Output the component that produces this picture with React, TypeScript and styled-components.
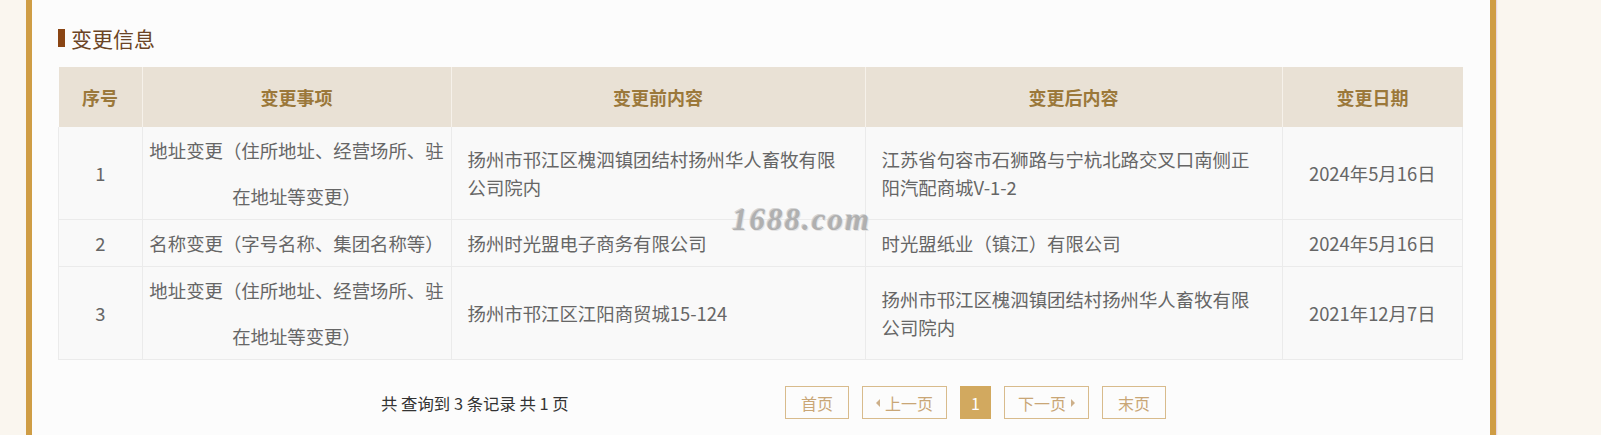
import React from "react";
import styled, { createGlobalStyle } from "styled-components";

const GlobalStyle = createGlobalStyle`
  html, body {
    margin: 0;
    padding: 0;
    background: #faf6ef;
  }
  body {
    font-family: "Noto Sans CJK SC", "Noto Sans", sans-serif;
  }
`;

const Page = styled.div`
  display: flex;
  min-height: 435px;
  padding-left: 26px;
  background: #faf6ef;
  overflow: hidden;
`;

const Panel = styled.section`
  position: relative;
  width: 1404px;
  padding: 0 28px 0 26px;
  border-left: 6px solid #cf9d45;
  border-right: 6px solid #cf9d45;
  background: #fcfcfc;
  box-shadow: 1px 0 1px rgba(200, 160, 200, 0.35);
`;

const SectionTitle = styled.h3`
  display: flex;
  align-items: center;
  gap: 6px;
  margin: 0;
  padding-top: 27px;
  height: 22px;
  font-size: 21px;
  font-weight: normal;
  line-height: 22px;
  color: #6b4424;
`;

const TitleMark = styled.span`
  display: inline-block;
  width: 7px;
  height: 18px;
  background: #8a4514;
`;

const Table = styled.table`
  width: 1400px;
  margin-top: 18px;
  border-collapse: collapse;
  table-layout: fixed;
  font-size: 18.4px;
`;

const HeadCell = styled.th<{ $w: number }>`
  width: ${(p) => p.$w}px;
  height: 60px;
  padding: 0;
  background: #e9e1d5;
  border-left: 1px solid #f6f1ea;
  color: #9b783a;
  font-size: 18px;
  font-weight: bold;
  text-align: center;
  &:first-child {
    border-left: none;
  }
`;

const Row = styled.tr`
  background: #f9f9f9;
  border-bottom: 1px solid #ebebeb;
`;

const Cell = styled.td<{ $align?: "left" | "center" }>`
  padding: ${(p) => (p.$align === "left" ? "0 20px 0 16px" : "0 6px")};
  border: 1px solid #ebebeb;
  border-top: none;
  line-height: 46px;
  color: #666;
  text-align: ${(p) => p.$align ?? "center"};
  vertical-align: middle;
`;

const Wrapped = styled.div`
  line-height: 28px;
`;

const Pager = styled.div`
  display: flex;
  align-items: center;
  margin-top: 26px;
  padding-left: 323px;
`;

const Summary = styled.span`
  width: 404px;
  font-size: 16.4px;
  color: #333;
  white-space: pre;
`;

const PageButtons = styled.div`
  display: flex;
  gap: 13px;
`;

const PageButton = styled.span<{ $active?: boolean; $pad?: number }>`
  display: flex;
  align-items: center;
  justify-content: center;
  gap: 5px;
  height: 31px;
  padding: 0 ${(p) => p.$pad ?? 15}px;
  border: 1px solid ${(p) => (p.$active ? "#d2a95f" : "#d8bb8c")};
  background: ${(p) => (p.$active ? "#d2a95f" : "transparent")};
  color: ${(p) => (p.$active ? "#fff" : "#c9a676")};
  font-size: 16px;
`;

const Arrow = styled.span<{ $dir: "left" | "right" }>`
  width: 0;
  height: 0;
  border-top: 4px solid transparent;
  border-bottom: 4px solid transparent;
  ${(p) =>
    p.$dir === "left"
      ? "border-right: 4px solid #cdb08a;"
      : "border-left: 4px solid #cdb08a;"}
`;

const Watermark = styled.span`
  position: absolute;
  left: 700px;
  top: 202px;
  font-family: "Liberation Serif", "DejaVu Serif", serif;
  font-style: italic;
  font-weight: bold;
  font-size: 31px;
  letter-spacing: 2px;
  color: #a9a9a9;
  text-shadow: 1px 1px 0 #e2e2e2, -1px -1px 0 #d0d0d0;
  opacity: 0.9;
  pointer-events: none;
`;

type Change = {
  no: number;
  item: string;
  before: string;
  after: string;
  date: string;
};

const changes: Change[] = [
  {
    no: 1,
    item: "地址变更（住所地址、经营场所、驻在地址等变更）",
    before: "扬州市邗江区槐泗镇团结村扬州华人畜牧有限公司院内",
    after: "江苏省句容市石狮路与宁杭北路交叉口南侧正阳汽配商城V-1-2",
    date: "2024年5月16日",
  },
  {
    no: 2,
    item: "名称变更（字号名称、集团名称等）",
    before: "扬州时光盟电子商务有限公司",
    after: "时光盟纸业（镇江）有限公司",
    date: "2024年5月16日",
  },
  {
    no: 3,
    item: "地址变更（住所地址、经营场所、驻在地址等变更）",
    before: "扬州市邗江区江阳商贸城15-124",
    after: "扬州市邗江区槐泗镇团结村扬州华人畜牧有限公司院内",
    date: "2021年12月7日",
  },
];

const columns = [
  { title: "序号", width: 83 },
  { title: "变更事项", width: 308 },
  { title: "变更前内容", width: 413 },
  { title: "变更后内容", width: 416 },
  { title: "变更日期", width: 180 },
];

export default function App() {
  return (
    <>
      <GlobalStyle />
      <Page>
        <Panel>
          <SectionTitle>
            <TitleMark />
            变更信息
          </SectionTitle>
          <Table>
            <thead>
              <tr>
                {columns.map((c) => (
                  <HeadCell key={c.title} $w={c.width}>
                    {c.title}
                  </HeadCell>
                ))}
              </tr>
            </thead>
            <tbody>
              {changes.map((c) => (
                <Row key={c.no}>
                  <Cell>{c.no}</Cell>
                  <Cell>{c.item}</Cell>
                  <Cell $align="left">
                    <Wrapped>{c.before}</Wrapped>
                  </Cell>
                  <Cell $align="left">
                    <Wrapped>{c.after}</Wrapped>
                  </Cell>
                  <Cell>{c.date}</Cell>
                </Row>
              ))}
            </tbody>
          </Table>
          <Pager>
            <Summary>共 查询到 3 条记录 共 1 页</Summary>
            <PageButtons>
              <PageButton>首页</PageButton>
              <PageButton $pad={13}>
                <Arrow $dir="left" />
                上一页
              </PageButton>
              <PageButton $active $pad={10}>
                1
              </PageButton>
              <PageButton $pad={13}>
                下一页
                <Arrow $dir="right" />
              </PageButton>
              <PageButton>末页</PageButton>
            </PageButtons>
          </Pager>
          <Watermark>1688.com</Watermark>
        </Panel>
      </Page>
    </>
  );
}
